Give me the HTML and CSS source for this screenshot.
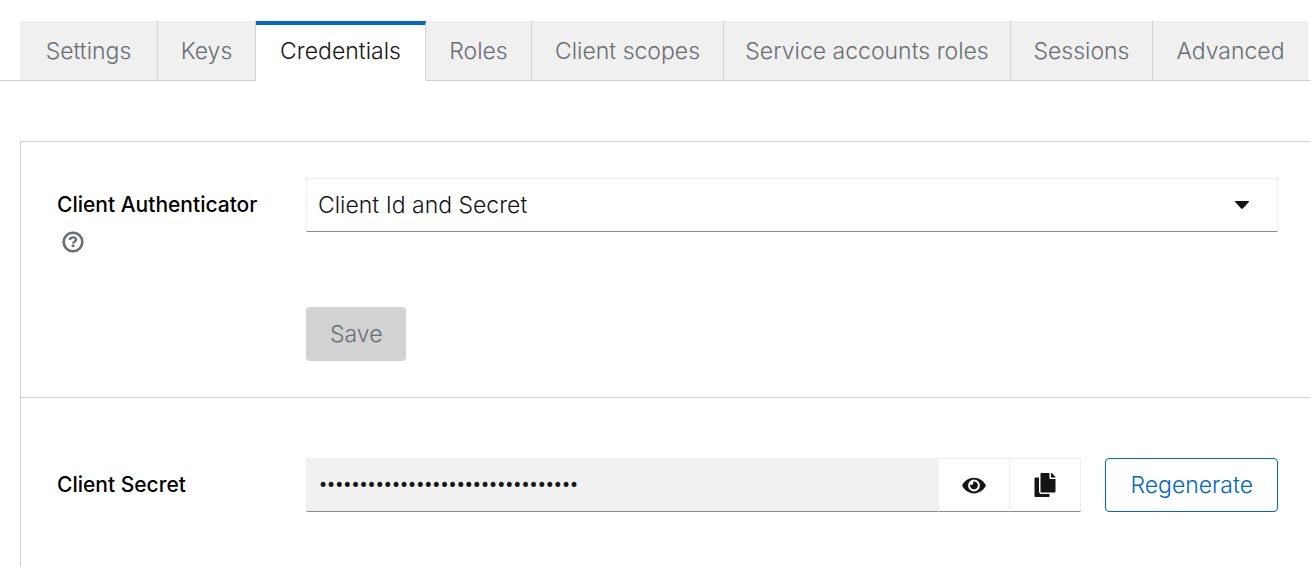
FILE: index.html
```html
<!DOCTYPE html>
<html lang="en">
<head>
<meta charset="utf-8">
<meta name="viewport" content="width=device-width, initial-scale=1">
<title>Client credentials</title>
<link rel="stylesheet" href="styles.css">
</head>
<body>
<nav class="tabs" aria-label="Client sections">
  <a class="tab" href="#settings">Settings</a>
  <a class="tab" href="#keys">Keys</a>
  <a class="tab tab-active" href="#credentials" aria-current="page">Credentials</a>
  <a class="tab" href="#roles">Roles</a>
  <a class="tab" href="#client-scopes">Client scopes</a>
  <a class="tab" href="#service-accounts-roles">Service accounts roles</a>
  <a class="tab" href="#sessions">Sessions</a>
  <a class="tab" href="#advanced">Advanced</a>
</nav>
<main class="card">
  <form class="section section-authenticator">
    <div class="label-group">
      <label class="label" for="authenticator">Client Authenticator</label>
      <button class="help" type="button" aria-label="Help for Client Authenticator">
        <svg class="help-icon" viewBox="0 0 22 22" aria-hidden="true">
          <circle cx="11" cy="11" r="9.3" fill="none" stroke="currentColor" stroke-width="2.6"/>
          <path d="M7.6 8.9c.5-1.7 1.7-2.5 3.4-2.5 1.9 0 3.1.9 3.1 2.4 0 1.9-3 1.8-3 3.7" fill="none" stroke="currentColor" stroke-width="2.3"/>
          <rect x="9.7" y="13.5" width="2.8" height="2.6" fill="currentColor"/>
        </svg>
      </button>
    </div>
    <div class="fields">
      <div class="select-wrap">
        <select class="select" id="authenticator">
          <option>Client Id and Secret</option>
        </select>
        <svg class="caret" viewBox="0 0 14 8" aria-hidden="true"><path d="M.6 0h12.8q1 0 .4.9L7.9 7.4q-.9.9-1.8 0L.2.9Q-.4 0 .6 0z" fill="currentColor"/></svg>
      </div>
      <button class="button button-disabled" type="submit" disabled>Save</button>
    </div>
  </form>
  <form class="section section-secret">
    <label class="label" for="secret">Client Secret</label>
    <div class="secret-row">
      <div class="input-group">
        <input class="secret" id="secret" type="password" value="abcdefghijklmnopqrstuvwxyz012345" readonly>
        <button class="control" type="button" aria-label="Show secret">
          <svg class="icon-eye" viewBox="0 0 576 512" aria-hidden="true"><path fill="currentColor" d="M572.52 241.4C518.29 135.59 410.93 64 288 64S57.68 135.64 3.48 241.41a32.35 32.35 0 0 0 0 29.19C57.71 376.41 165.07 448 288 448s230.32-71.64 284.52-177.41a32.35 32.35 0 0 0 0-29.19zM288 400a144 144 0 1 1 144-144 143.93 143.93 0 0 1-144 144zm0-240a95.31 95.31 0 0 0-25.31 3.79 47.85 47.85 0 0 1-66.9 66.9A95.78 95.78 0 1 0 288 160z"/></svg>
        </button>
        <button class="control" type="button" aria-label="Copy to clipboard">
          <svg class="icon-copy" viewBox="0 0 448 512" aria-hidden="true"><path fill="currentColor" d="M320 448v40c0 13.255-10.745 24-24 24H24c-13.255 0-24-10.745-24-24V120c0-13.255 10.745-24 24-24h72v296c0 30.879 25.121 56 56 56h168zm0-344V0H152c-13.255 0-24 10.745-24 24v368c0 13.255 10.745 24 24 24h272c13.255 0 24-10.745 24-24V128H344c-13.2 0-24-10.8-24-24zm120.971-31.029L375.029 7.029A24 24 0 0 0 358.059 0H352v96h96v-6.059a24 24 0 0 0-7.029-16.97z"/></svg>
        </button>
      </div>
      <button class="button button-secondary" type="button">Regenerate</button>
    </div>
  </form>
</main>
</body>
</html>
```
FILE: styles.css
```css
* {
  box-sizing: border-box;
}

body {
  margin: 0;
  background: #fff;
  color: #151515;
  font-family: Inter, "Open Sans", sans-serif;
  font-size: 23px;
  font-weight: 300;
  line-height: 36px;
}

button,
input,
select {
  margin: 0;
  font: inherit;
  color: inherit;
}

.tabs {
  display: grid;
  grid-template-columns: 138fr 98fr 170fr 106fr 192fr 287fr 142fr 155fr;
  margin-top: 21px;
  padding: 0 3px 0 20px;
  box-shadow: inset 0 -1px #d2d2d2;
}

.tab {
  height: 60px;
  padding: 12px 8px;
  border-right: 1px solid #d2d2d2;
  border-bottom: 1px solid #d2d2d2;
  background: #f0f0f0;
  color: #6a6e73;
  text-align: center;
  text-decoration: none;
  white-space: nowrap;
}

.tab:last-child {
  border-right: 0;
}

.tab-active {
  padding-top: 8px;
  border-top: 4px solid #06c;
  border-bottom-color: #fff;
  background: #fff;
  color: #151515;
}

.card {
  min-height: calc(100vh - 141px);
  margin: 60px 0 0 20px;
  border: solid #d2d2d2;
  border-width: 1px 0 0 1px;
}

.section {
  display: grid;
  grid-template-columns: 249px minmax(0, 1fr);
  padding: 36px 33px 36px 36px;
}

.section-authenticator {
  border-bottom: 1px solid #d2d2d2;
}

.section-secret {
  align-items: center;
  padding-top: 60px;
}

.label-group {
  display: flex;
  flex-direction: column;
  align-items: flex-start;
  padding-top: 9px;
}

.label {
  color: #000;
  font-size: 21px;
  font-weight: 500;
  white-space: nowrap;
}

.help {
  display: flex;
  margin: 8px 0 0 5px;
  padding: 0;
  border: 0;
  background: none;
  color: #6a6e73;
}

.help-icon {
  width: 22px;
  height: 22px;
}

.fields {
  display: grid;
  gap: 75px;
  justify-items: start;
}

.select-wrap {
  display: grid;
  align-items: center;
  width: 100%;
}

.select {
  grid-area: 1 / 1;
  width: 100%;
  height: 54px;
  padding: 0 48px 0 11px;
  border: 1px solid #f0f0f0;
  border-bottom-color: #8a8d90;
  border-radius: 0;
  background: #fff;
  appearance: none;
}

.caret {
  grid-area: 1 / 1;
  justify-self: end;
  width: 14px;
  height: 8px;
  margin-right: 29px;
  pointer-events: none;
}

.button {
  height: 54px;
  padding: 0 24px;
  border: 0;
  border-radius: 4px;
}

.button-disabled {
  background: #d2d2d2;
  color: #6a6e73;
}

.button-secondary {
  border: 1px solid #06c;
  background: #fff;
  color: #06c;
}

.secret-row {
  display: flex;
  gap: 24px;
}

.input-group {
  display: flex;
  flex: 1;
  min-width: 0;
}

.secret {
  flex: 1;
  min-width: 0;
  height: 54px;
  padding: 0 12px;
  border: 1px solid #f0f0f0;
  border-bottom-color: #8a8d90;
  border-radius: 0;
  background: #f0f0f0;
  font-family: Roboto, sans-serif;
  font-size: 24px;
  font-weight: 400;
}

.control {
  display: flex;
  align-items: center;
  justify-content: center;
  width: 71px;
  height: 54px;
  padding: 0;
  border: 1px solid #f0f0f0;
  border-left: 0;
  border-bottom-color: #8a8d90;
  background: #fff;
}

.icon-eye {
  width: 24px;
  height: 21px;
}

.icon-copy {
  width: 22px;
  height: 24px;
}
```
